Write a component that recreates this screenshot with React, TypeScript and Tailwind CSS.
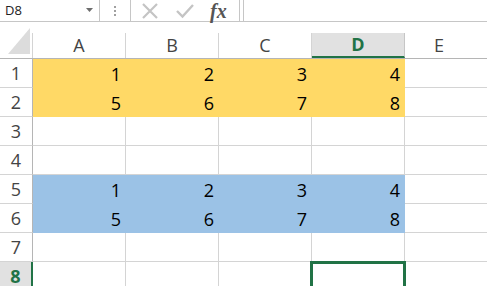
import React from "react";

const COLS = ["A", "B", "C", "D", "E"];
const yellow = "#FFD966";
const blue = "#9BC2E6";

type Row = { n: number; vals?: number[]; fill?: string };
const rows: Row[] = [
  { n: 1, vals: [1, 2, 3, 4], fill: yellow },
  { n: 2, vals: [5, 6, 7, 8], fill: yellow },
  { n: 3 },
  { n: 4 },
  { n: 5, vals: [1, 2, 3, 4], fill: blue },
  { n: 6, vals: [5, 6, 7, 8], fill: blue },
  { n: 7 },
  { n: 8 },
];

const font = { fontFamily: '"Open Sans", "Liberation Sans", sans-serif' };

export default function App() {
  return (
    <div className="relative w-[487px] h-[286px] overflow-hidden bg-white" style={font}>
      {/* formula bar */}
      <div className="flex h-[22px]">
        <div className="relative flex w-[100px] items-center border-r border-b border-[#c6c6c6] pl-[5px] text-[13px] text-[#222]">
          D8
          <svg className="absolute left-[86px] top-[8px]" width="7" height="4" viewBox="0 0 7 4">
            <path d="M0 0 L7 0 L3.5 4 Z" fill="#6d6d6d" />
          </svg>
        </div>
        <div className="flex w-[30px] flex-col items-center justify-center gap-[2px] border-b border-[#c6c6c6]">
          <span className="h-[2px] w-[2px] bg-[#a0a0a0]" />
          <span className="h-[2px] w-[2px] bg-[#a0a0a0]" />
          <span className="h-[2px] w-[2px] bg-[#a0a0a0]" />
        </div>
        <div className="flex w-[110px] items-center border-x border-b border-[#c6c6c6]">
          <svg className="ml-[10px]" width="18" height="18" viewBox="0 0 18 18">
            <path d="M2 2 L16 16 M16 2 L2 16" stroke="#c4c4c4" strokeWidth="2.2" />
          </svg>
          <svg className="ml-[17px]" width="18" height="18" viewBox="0 0 18 18">
            <path d="M1 9 L6.5 14.5 L17 3" stroke="#c4c4c4" strokeWidth="2.4" fill="none" />
          </svg>
          <span
            className="ml-[16px] pr-[2px] text-[20px] italic leading-[20px] text-[#555] font-bold"
            style={{ fontFamily: '"Liberation Serif", serif' }}
          >
            fx
          </span>
        </div>
        <div className="w-[3px] border-b border-[#c6c6c6]" />
        <div className="flex-1 border-l border-b border-[#c6c6c6]" />
      </div>
      <div className="h-[11px]" />
      {/* column headers */}
      <div className="flex h-[26px] border-b border-[#b5b5b5]">
        <div className="relative w-[33px] shrink-0 border-r border-[#d4d4d4]">
          <svg className="absolute left-[8px] top-[-5px]" width="23" height="27" viewBox="0 0 23 27">
            <path d="M22 0 L22 26 L0 26 Z" fill="#dcdcdc" />
          </svg>
        </div>
        {COLS.map((c) => {
          const sel = c === "D";
          return (
            <div
              key={c}
              className={
                sel
                  ? "flex w-[93px] shrink-0 items-center justify-center border-r border-[#c6c6c6] border-b-2 border-b-[#217346] bg-[#e1e1e1] text-[18px] font-bold text-[#217346]"
                  : c === "E"
                  ? "flex flex-1 items-center justify-center pr-[14px] text-[18px] text-[#444]"
                  : "flex w-[93px] shrink-0 items-center justify-center border-r border-[#d4d4d4] text-[18px] text-[#444]"
              }
            >
              {c}
            </div>
          );
        })}
      </div>
      {/* rows */}
      {rows.map((r) => {
        const sel = r.n === 8;
        return (
          <div key={r.n} className="flex h-[29px]">
            <div
              className={
                sel
                  ? "flex w-[33px] shrink-0 items-center justify-center border-r-2 border-b border-r-[#217346] border-b-[#d4d4d4] bg-[#e1e1e1] text-[18px] font-bold text-[#217346]"
                  : "flex w-[33px] shrink-0 items-center justify-center border-r border-b border-r-[#b5b5b5] border-b-[#d4d4d4] text-[18px] text-[#444]"
              }
            >
              {r.n}
            </div>
            {[0, 1, 2, 3].map((i) => (
              <div
                key={i}
                className="relative flex w-[93px] shrink-0 items-center justify-end border-r border-b pr-[4px] pt-[2px] text-[18px] text-black"
                style={{
                  backgroundColor: r.fill ?? "transparent",
                  borderColor: r.fill ?? "#d4d4d4",
                }}
              >
                {r.vals ? r.vals[i] : ""}
                {sel && i === 3 && (
                  <div className="absolute -left-[2px] -right-[2px] -top-[1px] h-[40px] border-x-[3px] border-t-[3px] border-[#217346]" />
                )}
              </div>
            ))}
            <div className="flex-1 border-b border-[#d4d4d4]" />
          </div>
        );
      })}
    </div>
  );
}
